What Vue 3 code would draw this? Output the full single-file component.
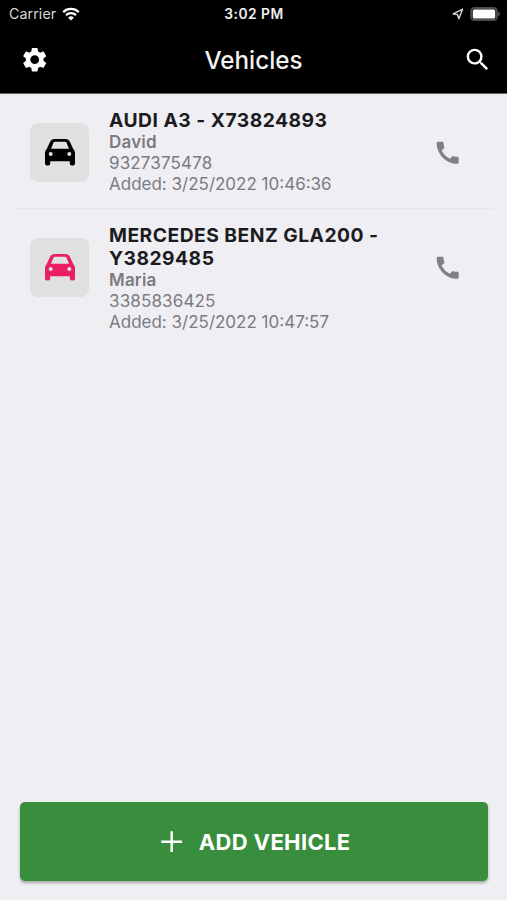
<script setup>
import { ref } from 'vue';

const vehicles = ref([
  {
    id: 1,
    name: 'AUDI A3 - X73824893',
    owner: 'David',
    phone: '9327375478',
    added: '3/25/2022 10:46:36',
    color: 'black'
  },
  {
    id: 2,
    name: 'MERCEDES BENZ GLA200 - Y3829485',
    owner: 'Maria',
    phone: '3385836425',
    added: '3/25/2022 10:47:57',
    color: 'pink'
  }
]);
</script>

<template>
  <div class="screen">
    <header class="header">
      <div class="status-bar">
        <div class="status-left">
          <span class="carrier">Carrier</span>
          <svg class="wifi" viewBox="0 0 18 14">
            <path d="M1.2 5.1a11.2 11.2 0 0 1 15.6 0" />
            <path d="M4 8.1a7.2 7.2 0 0 1 10 0" />
            <path class="wifi-dot" d="M9 13.6 6.1 10.7a4.1 4.1 0 0 1 5.8 0z" />
          </svg>
        </div>
        <span class="time">3:02 PM</span>
        <div class="status-right">
          <svg class="location" viewBox="0 0 12 12">
            <path d="M10.6 1.1 1.2 5.9l4.2.6 1.5 4.2z" />
          </svg>
          <svg class="battery" viewBox="0 0 31 14">
            <rect class="battery-case" x="1" y="1" width="26" height="12" rx="3.4" />
            <rect class="battery-level" x="2.8" y="2.5" width="22.4" height="9" rx="1.6" />
            <path class="battery-tip" d="M28.4 4.8c2 .7 2 3.7 0 4.4z" />
          </svg>
        </div>
      </div>
      <div class="app-bar">
        <button class="icon-button" aria-label="Settings">
          <svg class="icon" viewBox="0 0 24 24">
            <path d="M19.14 12.94c.04-.3.06-.61.06-.94s-.02-.64-.07-.94l2.03-1.58c.18-.14.23-.41.12-.61l-1.92-3.32c-.12-.22-.37-.29-.59-.22l-2.39.96c-.5-.38-1.03-.7-1.62-.94l-.36-2.54c-.04-.24-.24-.41-.48-.41h-3.84c-.24 0-.43.17-.47.41l-.36 2.54c-.59.24-1.13.57-1.62.94l-2.39-.96c-.22-.08-.47 0-.59.22L2.74 8.87c-.12.21-.08.47.12.61l2.03 1.58c-.05.3-.09.63-.09.94s.02.64.07.94l-2.03 1.58c-.18.14-.23.41-.12.61l1.92 3.32c.12.22.37.29.59.22l2.39-.96c.5.38 1.03.7 1.62.94l.36 2.54c.05.24.24.41.48.41h3.84c.24 0 .44-.17.47-.41l.36-2.54c.59-.24 1.13-.56 1.62-.94l2.39.96c.22.08.47 0 .59-.22l1.92-3.32c.12-.22.07-.47-.12-.61l-2.01-1.58zM12 15.6c-1.98 0-3.6-1.62-3.6-3.6s1.62-3.6 3.6-3.6 3.6 1.62 3.6 3.6-1.62 3.6-3.6 3.6z" />
          </svg>
        </button>
        <h1 class="title">Vehicles</h1>
        <button class="icon-button" aria-label="Search">
          <svg class="icon" viewBox="0 0 24 24">
            <path d="M15.5 14h-.79l-.28-.27A6.47 6.47 0 0 0 16 9.5 6.5 6.5 0 1 0 9.5 16c1.61 0 3.09-.59 4.23-1.57l.27.28v.79l5 4.99L20.49 19l-4.99-5zm-6 0C7.01 14 5 11.99 5 9.5S7.01 5 9.5 5 14 7.01 14 9.5 11.99 14 9.5 14z" />
          </svg>
        </button>
      </div>
    </header>

    <ul class="vehicle-list">
      <li v-for="vehicle in vehicles" :key="vehicle.id" class="vehicle">
        <div class="avatar" :class="vehicle.color">
          <svg class="car" viewBox="0 0 30 27">
            <path fill-rule="evenodd" d="M0 14.6C0 12.4.6 11.2 1.6 10.2L5 3Q6.3 0 9.6 0h10.800Q23.700 0 25 3l3.400 7.200c1 1 1.600 2.200 1.600 4.400v9.900a2 2 0 0 1-2 2h-1.200a2 2 0 0 1-2-2v-2.300H5.200v2.300a2 2 0 0 1-2 2H2a2 2 0 0 1-2-2zM6 9.800h18l-2.200-5.600q-.5-1.400-2-1.400h-9.600q-1.500 0-2 1.400zM5.700 13.100a2 2 0 1 0 0 4 2 2 0 0 0 0-4zM24.300 13.100a2 2 0 1 0 0 4 2 2 0 0 0 0-4z" />
          </svg>
        </div>
        <div class="details">
          <h2 class="name">{{ vehicle.name }}</h2>
          <p class="owner">{{ vehicle.owner }}</p>
          <p class="phone">{{ vehicle.phone }}</p>
          <p>Added: {{ vehicle.added }}</p>
        </div>
        <button class="icon-button call" aria-label="Call">
          <svg class="icon" viewBox="0 0 24 24">
            <path d="M20.01 15.38c-1.23 0-2.42-.2-3.53-.56a.977.977 0 0 0-1.01.24l-1.57 1.97c-2.83-1.35-5.48-3.9-6.89-6.83l1.95-1.66c.27-.28.35-.67.24-1.02-.37-1.11-.56-2.3-.56-3.53 0-.54-.45-.99-.99-.99H4.19C3.65 3 3 3.24 3 3.99 3 13.28 10.73 21 20.01 21c.71 0 .99-.63.99-1.18v-3.45c0-.54-.45-.99-.99-.99z" />
          </svg>
        </button>
      </li>
    </ul>

    <footer class="footer">
      <button class="add-button">
        <svg class="icon" viewBox="0 0 24 24">
          <path d="M20.5 13h-7.500v7.500h-2V13H3.500v-2H11V3.500h2V11h7.500z" />
        </svg>
        <span>ADD VEHICLE</span>
      </button>
    </footer>
  </div>
</template>

<style>
body {
  margin: 0;
  background: #efeef3;
}
</style>

<style scoped>
.screen {
  display: flex;
  flex-direction: column;
  height: 100vh;
  overflow: hidden;
  background: #efeef3;
  font-family: Inter, "Liberation Sans", sans-serif;
}

button {
  border: none;
  padding: 0;
  background: none;
  color: inherit;
  font-family: inherit;
  cursor: pointer;
}

h1,
h2,
p {
  margin: 0;
}

.icon {
  display: block;
  width: 29.4px;
  height: 29.4px;
  fill: currentColor;
}

.header {
  flex-shrink: 0;
  box-sizing: border-box;
  height: 94px;
  background: #000;
  border-bottom: 1px solid #636366;
  color: #fff;
}

.status-bar {
  display: grid;
  grid-template-columns: 1fr auto 1fr;
  align-items: center;
  height: 27px;
  padding: 0 8px 0 9px;
}

.status-left,
.status-right {
  display: flex;
  align-items: center;
}

.carrier {
  color: #d6d6d6;
  font-size: 14.2px;
  letter-spacing: 0.1px;
}

.wifi {
  width: 18px;
  height: 14px;
  margin-left: 5.5px;
  fill: none;
  stroke: #fff;
  stroke-width: 2.2;
}

.wifi .wifi-dot {
  fill: #fff;
  stroke: none;
}

.time {
  color: #f0f0f0;
  font-size: 13.8px;
  font-weight: 600;
  letter-spacing: 0.5px;
}

.status-right {
  justify-content: flex-end;
}

.location {
  width: 12px;
  height: 12px;
  margin-right: 6px;
  fill: none;
  stroke: #d0d0d0;
  stroke-width: 1.5;
  stroke-linejoin: round;
}

.battery {
  width: 31px;
  height: 14px;
  margin-right: -2px;
}

.battery-case {
  fill: #1c1c1c;
  stroke: #4c4c4c;
  stroke-width: 1.8;
}

.battery-level {
  fill: #fff;
}

.battery-tip {
  fill: #606060;
}

.app-bar {
  display: flex;
  align-items: center;
  justify-content: space-between;
  height: 66px;
  padding: 0 15px 0 20px;
}

.title {
  margin-right: 5px;
  font-size: 24.2px;
  font-weight: 500;
  color: #f2f2f2;
}

.vehicle-list {
  flex: 1;
  margin: 0;
  padding: 0 12px;
  list-style: none;
}

.vehicle {
  display: flex;
  align-items: flex-start;
  padding: 15px 32px 13px 18px;
  border-bottom: 1px solid #e8e7ec;
}

.vehicle:last-child {
  border-bottom: none;
}

.avatar {
  display: flex;
  align-items: center;
  justify-content: center;
  flex-shrink: 0;
  width: 59px;
  height: 59px;
  margin-top: 14px;
  margin-right: 20px;
  border-radius: 8px;
  background: #e0e0e0;
}

.avatar.black {
  color: #000;
}

.avatar.pink {
  color: #e91e63;
}

.car {
  width: 30px;
  height: 27px;
  fill: currentColor;
}

.details {
  flex: 1;
  color: #7c7b80;
  font-size: 17px;
  line-height: 21px;
}

.name {
  color: #1c1c1f;
  font-size: 19.3px;
  font-weight: 650;
  line-height: 23px;
  letter-spacing: 0.47px;
}

.owner {
  font-weight: 600;
  letter-spacing: 0.2px;
}

.phone {
  letter-spacing: 0.15px;
}

.call {
  margin-top: 28.5px;
  margin-right: 0.5px;
  color: #808084;
}

.footer {
  padding: 0 19px 19px 20px;
}

.add-button {
  display: flex;
  align-items: center;
  justify-content: center;
  width: 100%;
  height: 79px;
  border-radius: 5px;
  background: #388e3c;
  box-shadow: 0 2px 3px rgba(0, 0, 0, 0.3);
  color: #fff;
  font-size: 22px;
  font-weight: 650;
  letter-spacing: 0.35px;
  gap: 12px;
}
</style>
